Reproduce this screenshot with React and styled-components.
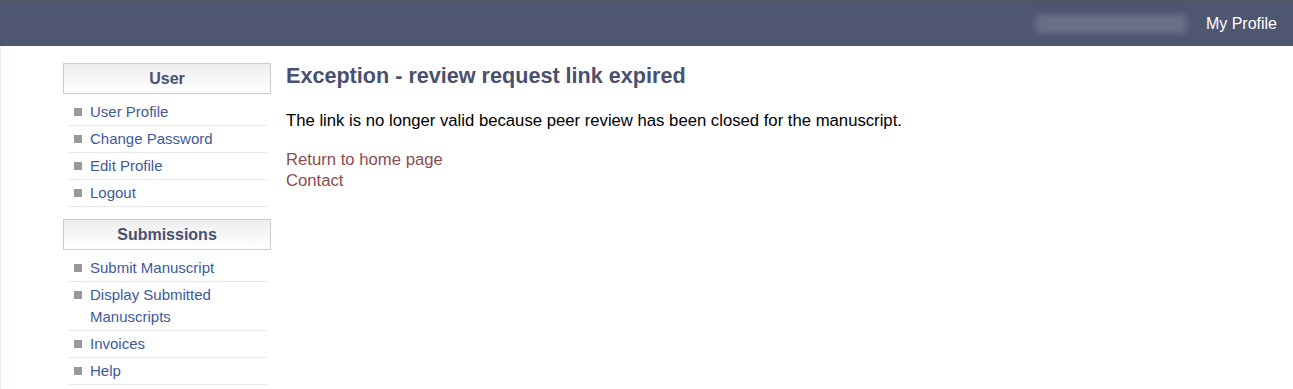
import styled, { createGlobalStyle } from 'styled-components';

const GlobalStyle = createGlobalStyle`
body {
    margin: 0;
    background: #fff;
    font-family: "Liberation Sans", Arial, sans-serif;
}`

const userLinks = ['User Profile', 'Change Password', 'Edit Profile', 'Logout']
const submissionLinks = ['Submit Manuscript', 'Display Submitted Manuscripts', 'Invoices', 'Help']

const SideSection = ({ title, links }) => (
    <Section>
        <SectionTitle>{title}</SectionTitle>
        <MenuList>
            {links.map(link => (
                <MenuItem key={link}>
                    <Bullet />
                    <MenuLink href="#">{link}</MenuLink>
                </MenuItem>
            ))}
        </MenuList>
    </Section>
)

const App = () => {
    return (
        <Page>
            <GlobalStyle />
            <TopBar>
                <BlurredName />
                <ProfileLink href="#">My Profile</ProfileLink>
            </TopBar>
            <Body>
                <Sidebar>
                    <SideSection title="User" links={userLinks} />
                    <SideSection title="Submissions" links={submissionLinks} />
                </Sidebar>
                <Main>
                    <Title>Exception - review request link expired</Title>
                    <Message>The link is no longer valid because peer review has been closed for the manuscript.</Message>
                    <Links>
                        <TextLink href="#">Return to home page</TextLink>
                        <TextLink href="#">Contact</TextLink>
                    </Links>
                </Main>
            </Body>
        </Page>
    )
}

const Page = styled.div`
min-height: 389px;
border-left: 1px solid #ece8e2;`

const TopBar = styled.header`
display: flex;
align-items: center;
justify-content: flex-end;
height: 45px;
margin-left: -1px;
border-top: 1px solid #55565a;
background: #4f5670;
padding-right: 16px;`

const BlurredName = styled.div`
width: 150px;
height: 18px;
margin-right: 20px;
background: #6b7088;
filter: blur(3px);`

const ProfileLink = styled.a`
color: #fff;
font-size: 16px;
text-decoration: none;`

const Body = styled.div`
display: flex;
gap: 15px;
padding: 17px 0 0 62px;`

const Sidebar = styled.aside`
display: flex;
flex-direction: column;
gap: 12px;
width: 208px;
flex-shrink: 0;`

const Section = styled.div`
display: flex;
flex-direction: column;`

const SectionTitle = styled.div`
height: 29px;
line-height: 29px;
border: 1px solid #cbcbcb;
background: linear-gradient(#eeeeee, #ffffff);
text-align: center;
font-size: 16px;
font-weight: bold;
color: #4a5070;`

const MenuList = styled.ul`
list-style: none;
margin: 5px 4px 0 5px;
padding: 0;`

const MenuItem = styled.li`
display: flex;
align-items: flex-start;
padding: 2px 0 2px 6px;
border-bottom: 1px solid #e9e9e9;
line-height: 22px;`

const Bullet = styled.span`
width: 8px;
height: 8px;
margin: 7px 8px 0 0;
background: #999999;
flex-shrink: 0;`

const MenuLink = styled.a`
font-size: 15px;
color: #3d5a9c;
text-decoration: none;`

const Main = styled.main`
display: flex;
flex-direction: column;
padding-top: 1px;`

const Title = styled.h1`
margin: 0;
font-size: 21.6px;
line-height: 24px;
color: #4a5070;`

const Message = styled.p`
margin: 23px 0 0;
font-size: 16.7px;
line-height: 20px;
color: #000;`

const Links = styled.div`
display: flex;
flex-direction: column;
margin-top: 18px;`

const TextLink = styled.a`
font-size: 16.7px;
line-height: 21px;
color: #8b4c4c;
text-decoration: none;`

export default App
